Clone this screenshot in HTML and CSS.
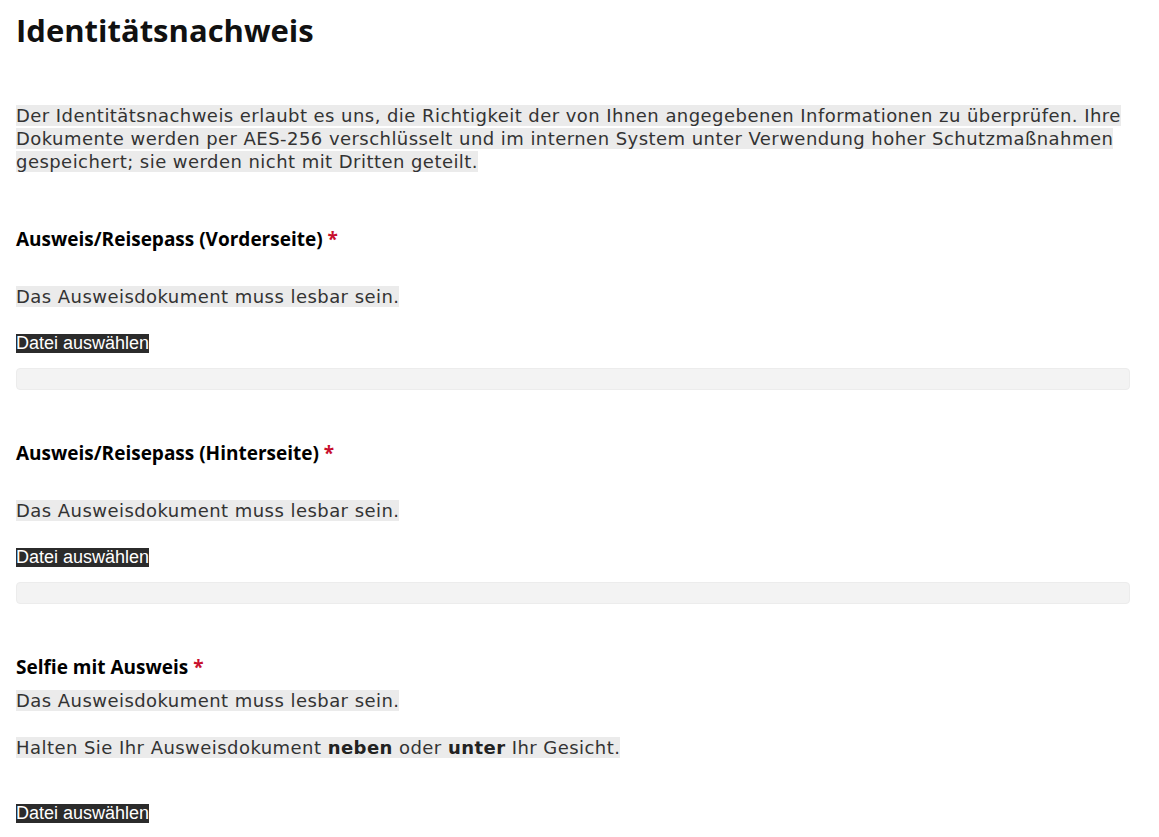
FILE: index.html
```html
<html>
  <head>
    <title>Identitätsnachweis</title>
    <link rel="stylesheet" href="styles.css">
  </head>
  <body>
    <main class="verify">
      <h1>Identitätsnachweis</h1>

      <p class="intro">
        <span class="hl">Der Identitätsnachweis erlaubt es uns, die Richtigkeit der von Ihnen angegebenen Informationen zu überprüfen. Ihre<br>Dokumente werden per AES-256 verschlüsselt und im internen System unter Verwendung hoher Schutzmaßnahmen<br>gespeichert; sie werden nicht mit Dritten geteilt.</span>
      </p>

      <section class="upload">
        <label class="upload-label" for="front">Ausweis/Reisepass (Vorderseite) <span class="req">*</span></label>
        <p class="hint hint-spaced"><span class="hl">Das Ausweisdokument muss lesbar sein.</span></p>
        <label class="file-btn" for="front">Datei auswählen</label>
        <input class="file-input" type="file" id="front">
        <div class="file-bar"></div>
      </section>

      <section class="upload">
        <label class="upload-label" for="back">Ausweis/Reisepass (Hinterseite) <span class="req">*</span></label>
        <p class="hint hint-spaced"><span class="hl">Das Ausweisdokument muss lesbar sein.</span></p>
        <label class="file-btn" for="back">Datei auswählen</label>
        <input class="file-input" type="file" id="back">
        <div class="file-bar"></div>
      </section>

      <section class="upload">
        <label class="upload-label" for="selfie">Selfie mit Ausweis <span class="req">*</span></label>
        <p class="hint hint-first"><span class="hl">Das Ausweisdokument muss lesbar sein.</span></p>
        <p class="hint hint-last"><span class="hl">Halten Sie Ihr Ausweisdokument <b>neben</b> oder <b>unter</b> Ihr Gesicht.</span></p>
        <label class="file-btn" for="selfie">Datei auswählen</label>
        <input class="file-input" type="file" id="selfie">
      </section>
    </main>
  </body>
</html>
```

FILE: styles.css
```css
html,
body {
  margin: 0;
  padding: 0;
  background: #fff;
}

.verify {
  padding: 0 29px 0 16px;
}

h1 {
  font-family: "Open Sans", sans-serif;
  font-weight: 700;
  font-size: 31px;
  line-height: 40px;
  color: #111;
  margin: 10px 0 0;
}

.hl {
  background: #ebebeb;
}

.intro,
.hint {
  font-family: "DejaVu Sans", sans-serif;
  font-size: 18px;
  letter-spacing: 0.45px;
  line-height: 23px;
  color: #333;
  margin: 0;
}

.intro {
  margin-top: 54px;
  white-space: nowrap;
}

.hint b {
  color: #222;
}

.upload {
  display: flex;
  flex-direction: column;
  align-items: flex-start;
  margin-top: 51px;
}

.intro + .upload {
  margin-top: 54px;
}

.upload-label {
  font-family: "Open Sans", sans-serif;
  font-weight: 700;
  font-size: 19px;
  line-height: 24px;
  color: #000;
}

.req {
  color: #c8102e;
}

.hint-spaced {
  margin-top: 34px;
}

.hint-first {
  margin-top: 10px;
}

.hint-last {
  margin-top: 24px;
}

.file-btn {
  margin-top: 26px;
  background: #2b2b2b;
  color: #fff;
  font-family: "Liberation Sans", Arial, sans-serif;
  font-size: 18px;
  line-height: 19px;
  cursor: pointer;
}

.hint-last + .file-btn {
  margin-top: 45px;
}

.file-input {
  display: none;
}

.file-bar {
  align-self: stretch;
  margin-top: 15px;
  height: 20px;
  background: #f3f3f3;
  border: 1px solid #ececec;
  border-radius: 4px;
}
```
